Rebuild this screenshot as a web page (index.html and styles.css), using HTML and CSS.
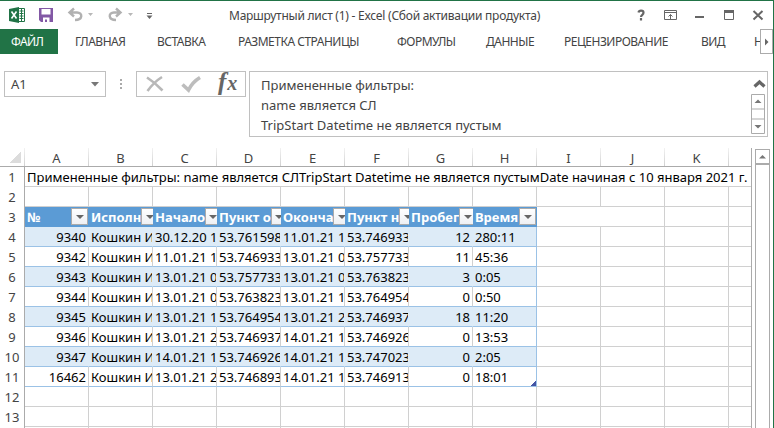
FILE: index.html
```html
<!DOCTYPE html>
<html lang="ru">
<head>
<meta charset="utf-8">
<title>Маршрутный лист (1) - Excel</title>
<link rel="stylesheet" href="styles.css">
</head>
<body>
<div class="window">
  <header class="titlebar">
    <svg class="quick" width="160" height="28" viewBox="0 3 160 28">
      <path d="M9 9l10-2v16l-10-2z" fill="#217346"/>
      <path d="M19 8.5h5.500v13H19" fill="#fff" stroke="#217346"/>
      <path d="M19.500 11h4M19.500 13.500h4M19.500 16h4M19.500 18.500h4M21.500 9v12" stroke="#217346"/>
      <path d="M11.500 11.500l5 7M16.500 11.500l-5 7" stroke="#fff" stroke-width="1.600"/>
      <path d="M39 8h14v14H41l-2-2z" fill="#8258a5"/>
      <path d="M41.500 9h9v5.500h-9zM43 17.500h6.500V22H47v-2.500h-2V22h-2z" fill="#fff"/>
      <path d="M70 12.500h7c6 0 6 7.500-2 7.500M74 8.500l-4.500 4 4.500 4" fill="none" stroke="#b1b1b1" stroke-width="2.400"/>
      <path d="M88 13h5l-2.500 3zM128 13h5l-2.500 3z" fill="#b8b8b8"/>
      <path d="M120 12.500h-6c-6 0-6 7.500 2 7.500M116 8.500l4.500 4-4.500 4" fill="none" stroke="#b1b1b1" stroke-width="2.400"/>
      <path d="M147 13.500h5" stroke="#666"/><path d="M146.500 15.500h6l-3 3.500z" fill="#666"/>
    </svg>
    <div class="title">Маршрутный лист (1) - Excel (Сбой активации продукта)</div>
    <svg class="controls" width="140" height="28" viewBox="632 3 140 28">
      <path d="M638.500 12.500c.5-2.500 5-2.500 5 .3 0 2-2.500 2-2.500 4.200M641 18v2.500" fill="none" stroke="#666" stroke-width="2.200"/>
      <path d="M664.500 10.500h12v9h-12zM664.500 12.500h12M670.500 19v-4.500M668.500 16.500l2-2 2 2" fill="none" stroke="#666"/>
      <path d="M695 17h9" stroke="#666" stroke-width="2"/>
      <path d="M724.500 10.500h9v9h-9z" fill="none" stroke="#666"/><path d="M724 10h10v3h-10z" fill="#666"/>
      <path d="M753.500 11l9 8.500M762.500 11l-9 8.500" stroke="#666" stroke-width="2"/>
    </svg>
  </header>
  <nav class="tabs">
    <span class="tab file">ФАЙЛ</span>
    <span class="tab t1">ГЛАВНАЯ</span>
    <span class="tab t2">ВСТАВКА</span>
    <span class="tab t3">РАЗМЕТКА СТРАНИЦЫ</span>
    <span class="tab t4">ФОРМУЛЫ</span>
    <span class="tab t5">ДАННЫЕ</span>
    <span class="tab t6">РЕЦЕНЗИРОВАНИЕ</span>
    <span class="tab t7">ВИД</span>
    <span class="tab t8">Н</span>
    <span class="more"><svg width="11" height="23"><path d="M4 8.500l3.500 3.500-3.500 3.500z" fill="#666"/></svg></span>
  </nav>
  <section class="formula">
    <div class="namebox"><span>A1</span><svg width="8" height="5"><path d="M0 0h8l-4 4.500z" fill="#777"/></svg></div>
    <svg class="dots" width="2" height="11"><path d="M0 0h2v2H0zM0 4h2v2H0zM0 8h2v2H0z" fill="#aaa"/></svg>
    <div class="actions">
      <svg width="108" height="24" viewBox="137 72 108 24">
        <path d="M147 77.500q8 5 15.500 13M162 77q-8 5-14.500 14" fill="none" stroke="#b8b8b8" stroke-width="2.600"/>
        <path d="M182.500 84.500l6 5.500q4-8 11.500-12.500" fill="none" stroke="#bdbdbd" stroke-width="3.600"/>
      </svg>
      <span class="fx"><i>f</i><i class="x">x</i></span>
    </div>
    <div class="input">
      <div class="lines"><div class="l1">Примененные фильтры:</div><div class="l2">name является СЛ</div><div class="l3">TripStart Datetime не является пустым</div></div>
      <div class="side">
        <svg class="up" width="13" height="9"><path d="M1.500 7.500l5-4.500 5 4.500" fill="none" stroke="#666" stroke-width="3.200"/></svg>
        <svg width="14" height="40"><path d="M.5.5h13v39H.5zM0 15h14M0 25h14" fill="#fff" stroke="#ababab"/><path d="M3.500 9h7L7 5.500zM3.500 31h7L7 34.500z" fill="#777"/></svg>
      </div>
    </div>
  </section>
  <main class="book">
    <div class="sheet">
      <div class="cols"><span class="corner"></span><span>A</span><span>B</span><span>C</span><span>D</span><span>E</span><span>F</span><span>G</span><span>H</span><span>I</span><span>J</span><span>K</span><span></span></div>
      <div class="grid">
        <div class="row"><b>1</b><span class="long">Примененные фильтры: name является СЛTripStart Datetime не является пустымDate начиная с 10 января 2021 г. и</span></div>
        <div class="row"><b>2</b></div>
        <div class="row head"><b>3</b><span>№<i></i></span><span>Исполн<i></i></span><span>Начало<i></i></span><span>Пункт о<i></i></span><span>Оконча<i></i></span><span>Пункт н<i></i></span><span>Пробег<i></i></span><span>Время<i></i></span><span class="blank"></span></div>
        <div class="row data band"><b>4</b><span>9340</span><span>Кошкин И</span><span>30.12.20 13</span><span>53.761598</span><span>11.01.21 10</span><span>53.746933</span><span>12</span><span>280:11</span></div>
        <div class="row data"><b>5</b><span>9342</span><span>Кошкин И</span><span>11.01.21 1</span><span>53.746933</span><span>13.01.21 09</span><span>53.757733</span><span>11</span><span>45:36</span></div>
        <div class="row data band"><b>6</b><span>9343</span><span>Кошкин И</span><span>13.01.21 09</span><span>53.757733</span><span>13.01.21 09</span><span>53.763823</span><span>3</span><span>0:05</span></div>
        <div class="row data"><b>7</b><span>9344</span><span>Кошкин И</span><span>13.01.21 09</span><span>53.763823</span><span>13.01.21 10</span><span>53.764954</span><span>0</span><span>0:50</span></div>
        <div class="row data band"><b>8</b><span>9345</span><span>Кошкин И</span><span>13.01.21 10</span><span>53.764954</span><span>13.01.21 2</span><span>53.746937</span><span>18</span><span>11:20</span></div>
        <div class="row data"><b>9</b><span>9346</span><span>Кошкин И</span><span>13.01.21 2</span><span>53.746937</span><span>14.01.21 1</span><span>53.746926</span><span>0</span><span>13:53</span></div>
        <div class="row data band"><b>10</b><span>9347</span><span>Кошкин И</span><span>14.01.21 11</span><span>53.746926</span><span>14.01.21 14</span><span>53.747023</span><span>0</span><span>2:05</span></div>
        <div class="row data"><b>11</b><span>16462</span><span>Кошкин И</span><span>13.01.21 2</span><span>53.746893</span><span>14.01.21 13</span><span>53.746913</span><span>0</span><span class="last">18:01</span></div>
        <div class="row"><b>12</b></div>
        <div class="row"><b>13</b></div>
        <div class="row"><b></b></div>
      </div>
    </div>
    <div class="scroll"><div class="arrow"><svg width="13" height="13"><path d="M3 8.500h7L6.500 5z" fill="#777"/></svg></div><div class="thumb"></div></div>
  </main>
</div>
</body>
</html>
```

FILE: styles.css
```css
* { box-sizing: border-box; }
body { margin: 0; background: #fff; font-family: "Noto Sans", "Open Sans", sans-serif; color: #444; overflow: hidden; }
svg { display: block; flex: none; }
.window { width: 774px; height: 428px; border-top: 1px solid #217346; border-right: 1px solid #217346; display: flex; flex-direction: column; overflow: hidden; }
.titlebar { height: 28px; display: flex; flex: none; }
.quick { margin-top: 2px; }
.controls { margin-top: 2px; }
.title { width: 472px; padding-left: 69px; font-size: 12px; line-height: 30px; white-space: nowrap; letter-spacing: -.25px; }
.tabs { height: 25px; flex: none; display: flex; font-size: 12px; line-height: 25px; overflow: hidden; color: #444; }
.tab { flex: none; white-space: nowrap; letter-spacing: -.5px; }
.file { width: 58px; padding-left: 11px; background: #217346; color: #fff; margin-right: 17px; }
.t1 { width: 82px; } .t2 { width: 81px; } .t3 { width: 159px; } .t4 { width: 89px; }
.t5 { width: 78px; } .t6 { width: 137px; } .t7 { width: 53px; } .t8 { width: 6px; overflow: hidden; }
.more { width: 13px; height: 25px; border: 1px solid #ababab; background: #fff; }
.formula { height: 94px; flex: none; display: flex; padding: 17px 0 0 4px; }
.namebox { width: 102px; height: 26px; border: 1px solid #c0c0c0; display: flex; align-items: center; justify-content: space-between; padding: 0 6px; font-size: 13px; }
.dots { margin: 8px 15px 0 14px; }
.actions { width: 110px; height: 26px; border: 1px solid #c0c0c0; position: relative; margin-right: 3px; margin-left: -1px; }
.fx { position: absolute; left: 81px; top: -4px; font: bold 25px/27px "Liberation Serif", serif; color: #666; white-space: nowrap; }
.fx .x { font-size: 20px; margin-left: 1px; }
.input { width: 519px; height: 66px; border: 1px solid #c0c0c0; display: flex; justify-content: space-between; padding: 3px 1px 0 11px; }
.lines { font-size: 13px; line-height: 20px; white-space: nowrap; }
.side { width: 15px; display: flex; flex-direction: column; }
.up { margin: 4px 0 6px 2px; }
.book { flex: 1; display: flex; min-height: 0; }
.sheet { width: 752px; border-right: 1px solid #ababab; flex: none; overflow: hidden; }
.cols { height: 19px; border-bottom: 1px solid #ababab; display: grid; grid-template-columns: 25px repeat(11, 64px) 23px; font-size: 13px; line-height: 20px; text-align: center; overflow: hidden; }
.cols span { border-right: 1px solid; border-image: linear-gradient(#f4f4f4, #cfcfcf) 1; height: 18px; }
.cols span:last-child { border: 0; }
.corner { background: linear-gradient(135deg, transparent 50%, #dcdcdc 50%) 10px 4px / 11px 11px no-repeat; }
.grid { background: repeating-linear-gradient(90deg, transparent 0 63px, #d0d0d0 63px 64px) 25px 0, repeating-linear-gradient(#fff 0 19px, #d0d0d0 19px 20px); }
.row { height: 20px; display: grid; grid-template-columns: 25px repeat(8, 64px); font-size: 13px; line-height: 21px; color: #000; white-space: nowrap; }
.row b { font-weight: 400; color: #444; text-align: center; background: #fff; border-right: 1px solid #ababab; border-bottom: 1px solid #d8d8d8; }
.row span { overflow: hidden; padding: 0 2px; height: 20px; }
.row .long { grid-column: 2 / -1; width: 726px; background: #fff; border-bottom: 1px solid #d0d0d0; }
.data span { border-right: 1px solid #d0d0d0; border-bottom: 1px solid #9bc2e6; background: #fff; }
.data.band span { background: #ddebf7; border-right-color: #ddebf7; }
.row.data span:last-child { border-right-color: #9bc2e6; }
.data span:nth-child(2), .data span:nth-child(8) { text-align: right; }
.head span { background: #5b9bd5; color: #fff; font-weight: 700; display: flex; justify-content: space-between; overflow: hidden; padding-right: 1px; }
.head i { width: 17px; height: 17px; margin-top: 1px; flex: none; border: 1px solid #ababab; background: linear-gradient(#fff, #eef0f4); display: flex; align-items: center; justify-content: center; margin-left: auto; }
.head i::after { content: ""; border: 4px solid transparent; border-top-color: #666; border-bottom: 0; }
.head { grid-template-columns: 25px repeat(8, 64px) 127px; }
.head .blank { background: #fff; height: 19px; }
.row.data .last { background: linear-gradient(135deg, transparent 50%, #4455a5 50%) right bottom / 5px 5px no-repeat #fff; }
.scroll { width: 15px; margin: 1px 0 0 3px; display: flex; flex-direction: column; }
.arrow { height: 15px; border: 1px solid #ababab; }
.thumb { flex: 1; border: 1px solid #ababab; border-bottom: 0; }
```
